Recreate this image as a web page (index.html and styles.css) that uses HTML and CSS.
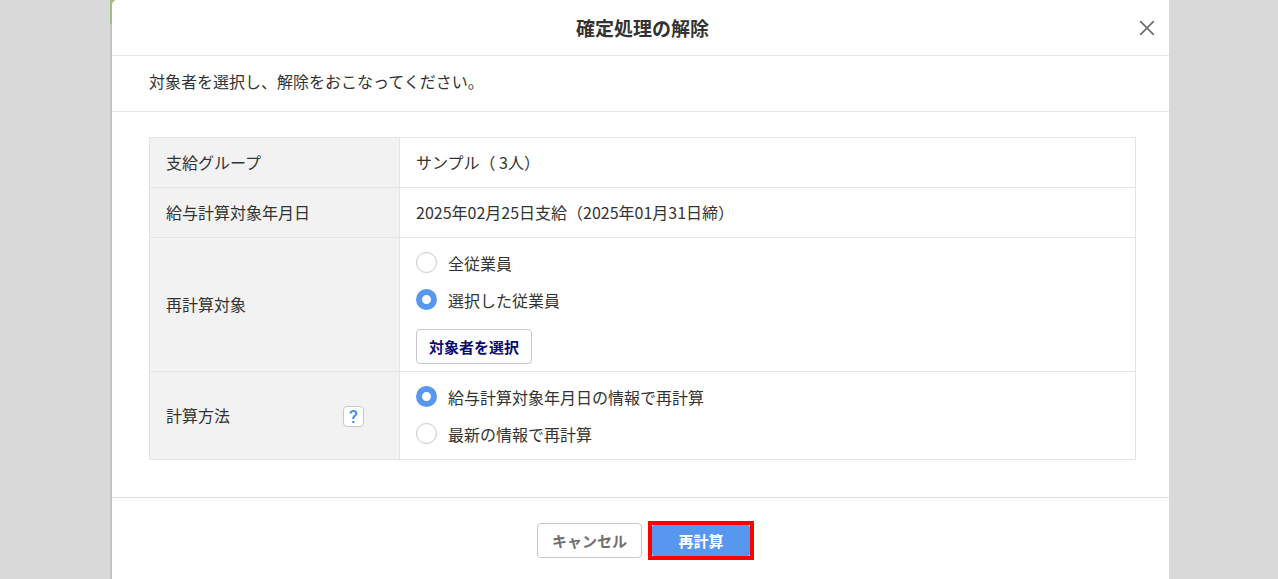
FILE: index.html
```html
<!DOCTYPE html>
<html lang="ja">
<head>
  <meta charset="UTF-8">
  <title>確定処理の解除</title>
  <link rel="stylesheet" href="styles.css">
</head>
<body>

  <div class="backdrop">
    <form class="dialog" role="dialog" aria-labelledby="dialogTitle" onsubmit="return false;">

      <!-- Header -->
      <header class="dialog-header">
        <h1 id="dialogTitle">確定処理の解除</h1>
        <button type="button" class="close" aria-label="閉じる">
          <svg width="16" height="16" viewBox="0 0 16 16">
            <path d="M1.7 1.7 L14.3 14.3 M14.3 1.7 L1.7 14.3" stroke="#707070" stroke-width="1.8" stroke-linecap="round" fill="none"/>
          </svg>
        </button>
      </header>

      <p class="message">対象者を選択し、解除をおこなってください。</p>

      <!-- Settings -->
      <div class="dialog-body">
        <table>
          <tr>
            <th scope="row">支給グループ</th>
            <td>サンプル（ 3人）</td>
          </tr>
          <tr>
            <th scope="row">給与計算対象年月日</th>
            <td>2025年02月25日支給（2025年01月31日締）</td>
          </tr>
          <tr>
            <th scope="row">再計算対象</th>
            <td>
              <div class="options">
                <label><input type="radio" name="target" value="all">全従業員</label>
                <label><input type="radio" name="target" value="selected" checked>選択した従業員</label>
              </div>
              <button type="button" class="btn btn-select">対象者を選択</button>
            </td>
          </tr>
          <tr>
            <th scope="row">
              <div class="with-help">
                計算方法
                <button type="button" class="help" aria-label="ヘルプ">?</button>
              </div>
            </th>
            <td>
              <div class="options">
                <label><input type="radio" name="method" value="date" checked>給与計算対象年月日の情報で再計算</label>
                <label><input type="radio" name="method" value="latest">最新の情報で再計算</label>
              </div>
            </td>
          </tr>
        </table>
      </div>

      <!-- Actions -->
      <footer class="dialog-footer">
        <button type="button" class="btn btn-cancel">キャンセル</button>
        <div class="marker">
          <button type="submit" class="btn btn-primary">再計算</button>
        </div>
      </footer>

    </form>
  </div>

</body>
</html>
```

FILE: styles.css
```css
* {
  box-sizing: border-box;
}
body {
  margin: 0;
  background-color: #d9d9d9;
  color: #333;
  font-family: "Noto Sans CJK JP", sans-serif;
  font-size: 16px;
  line-height: 24px;
}
button {
  font-family: inherit;
  cursor: pointer;
}

/* thin strip of the page that shows beside the dialog */
.backdrop {
  min-height: 100vh;
  margin: 0 109px 0 110px;
  padding-left: 2px;
  display: flex;
  background: linear-gradient(#a5bb82 24px, #c4c4c4 24px);
}
.dialog {
  flex: 1;
  background-color: #fff;
  border-top-left-radius: 5px;
}

.dialog-header {
  position: relative;
  padding: 16px 16px 16px 20px;
  border-bottom: 1px solid #e6e6e6;
  text-align: center;
}
.dialog-header h1 {
  margin: 0;
  font-size: 19px;
  line-height: 23px;
  font-weight: bold;
}
.close {
  position: absolute;
  top: 16px;
  right: 10px;
  width: 24px;
  height: 24px;
  padding: 0;
  border: none;
  background: none;
}
.close svg {
  display: block;
  margin: auto;
}

.message {
  margin: 0;
  padding: 13px 37px 18px;
  border-bottom: 1px solid #e6e6e6;
}

.dialog-body {
  padding: 25px 33px 37px 37px;
  border-bottom: 1px solid #e0e0e0;
}
table {
  width: 100%;
  border-collapse: collapse;
}
th,
td {
  height: 50px;
  padding: 6px 16px 7px;
  border: 1px solid #e4e4e4;
  text-align: left;
}
th {
  width: 250px;
  background-color: #f2f2f2;
  font-weight: normal;
}
.with-help {
  display: flex;
  justify-content: space-between;
  align-items: flex-end;
  padding-right: 19px;
}
.help {
  width: 21px;
  height: 21px;
  padding: 0;
  border: 1px solid #c8c8c8;
  border-radius: 4px;
  background-color: #fff;
  color: #448af0;
  font-family: Roboto, sans-serif;
  font-size: 18px;
  line-height: 19px;
  font-weight: 500;
}

.options label {
  display: flex;
  align-items: center;
  gap: 11px;
  height: 37px;
}
input[type="radio"] {
  appearance: none;
  width: 21px;
  height: 21px;
  margin: 0;
  border: 1px solid #c8c8c8;
  border-radius: 50%;
  background-color: #fff;
}
input[type="radio"]:checked {
  border: 6px solid #5797f0;
}

.btn {
  height: 35px;
  padding: 0 12px;
  border: 1px solid #c8c8c8;
  border-radius: 4px;
  background-color: #fff;
  font-size: 15px;
  line-height: 24px;
  font-weight: bold;
}
.btn-select {
  display: block;
  margin-top: 11px;
  color: #0b0b70;
}

.dialog-footer {
  display: flex;
  justify-content: center;
  align-items: center;
  gap: 6px;
  padding: 23px 0 19px 10px;
}
.btn-cancel {
  width: 105px;
  color: #707070;
}
.marker {
  width: 106px;
  border: 4px solid #f00;
}
.btn-primary {
  display: block;
  width: 100%;
  height: 31px;
  border: none;
  border-radius: 2px;
  background-color: #5797f0;
  color: #fff;
}
```
